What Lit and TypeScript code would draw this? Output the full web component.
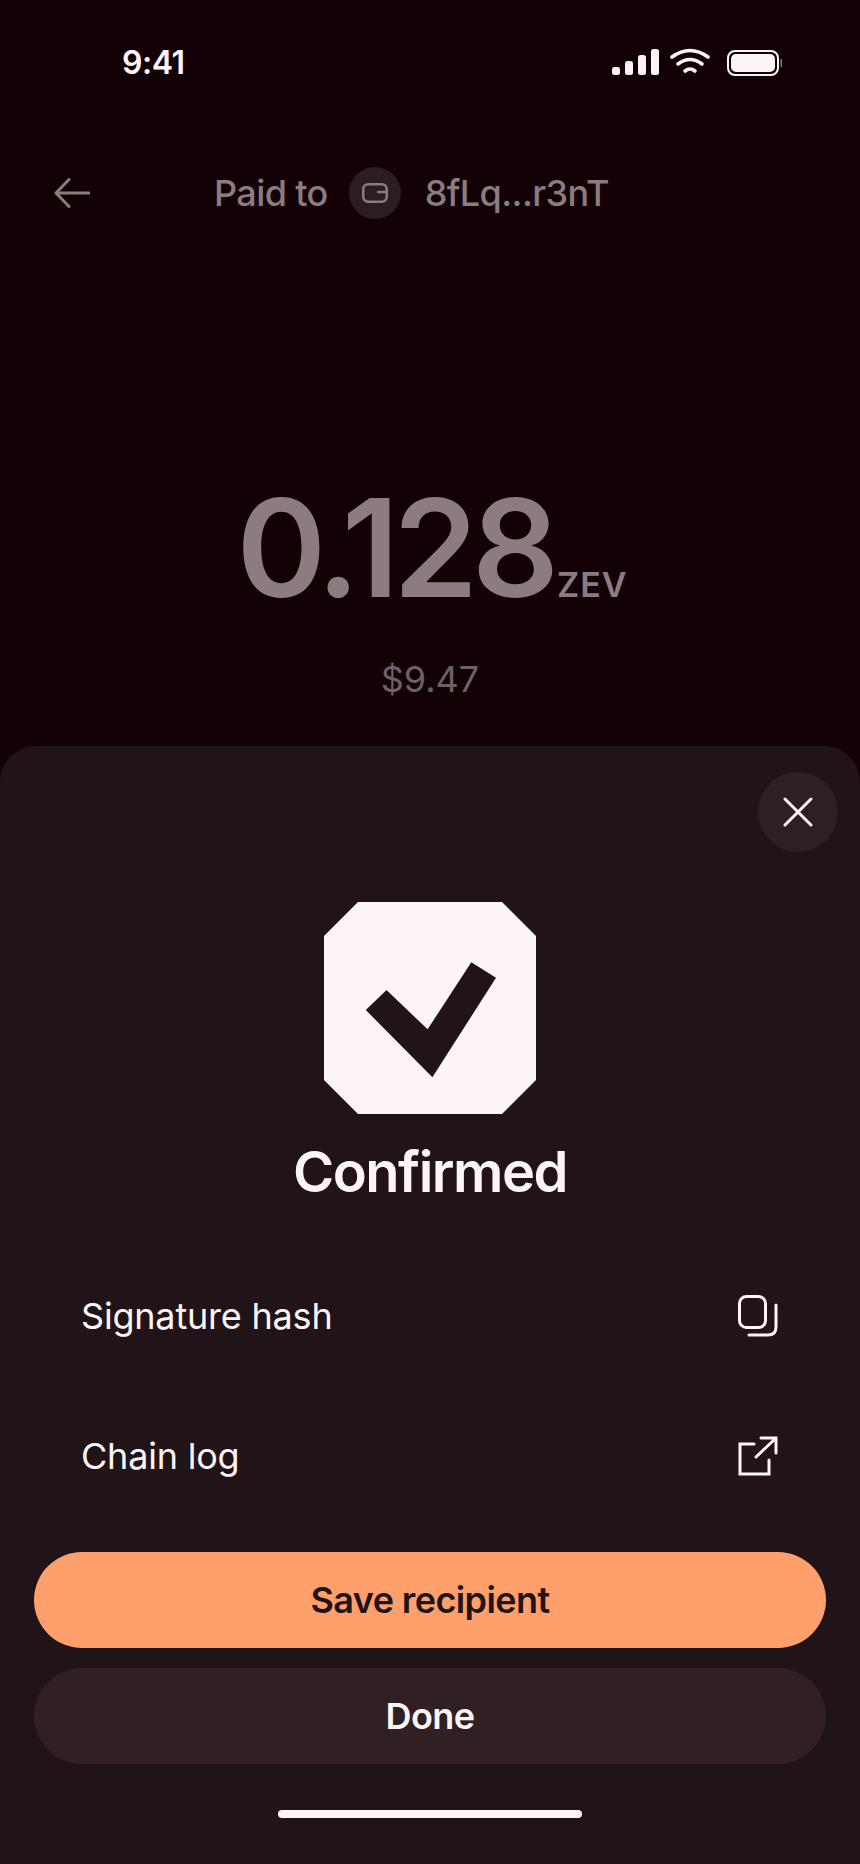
import { LitElement, html, css } from "lit";
import { customElement } from "lit/decorators.js";

@customElement("app-root")
export class AppRoot extends LitElement {
  static styles = css`
    :host {
      display: flex;
      flex-direction: column;
      width: 860px;
      height: 1864px;
      background: #120206;
      font-family: Inter, "Liberation Sans", sans-serif;
      color: #fdf5f5;
      overflow: hidden;
    }
    svg { display: block; flex: none; }
    .status {
      height: 124px;
      flex: none;
      display: flex;
      align-items: center;
      justify-content: space-between;
      padding: 0 78px 0 122px;
      box-sizing: border-box;
    }
    .time { font-size: 32px; font-weight: 600; letter-spacing: -0.5px; }
    .nav {
      height: 138px;
      flex: none;
      display: flex;
      align-items: center;
      padding-left: 54px;
      color: #8c7b80;
      font-size: 36px;
      font-weight: 500;
      letter-spacing: -0.6px;
    }
    .title { display: flex; align-items: center; margin-left: 124px; }
    .avatar {
      width: 52px;
      height: 52px;
      border-radius: 50%;
      background: #2b1e21;
      display: flex;
      align-items: center;
      justify-content: center;
      margin: 0 24px 0 21px;
    }
    .amount {
      flex: none;
      height: 484px;
      box-sizing: border-box;
      padding-top: 220px;
      display: flex;
      flex-direction: column;
      align-items: center;
      color: #8c7b80;
    }
    .value { display: flex; align-items: baseline; line-height: 132px; margin-left: 4px; }
    .num { font-size: 136px; font-weight: 600; letter-spacing: -6px; }
    .unit { font-size: 34px; font-weight: 600; letter-spacing: 1px; margin-left: 4px; }
    .fiat { font-size: 36px; line-height: 44px; color: #6f6065; margin-top: 6px; }
    .sheet {
      position: relative;
      flex: 1;
      background: #211418;
      border-radius: 36px 36px 0 0;
      display: flex;
      flex-direction: column;
      align-items: center;
      padding: 156px 34px 0;
      box-sizing: border-box;
    }
    .close {
      position: absolute;
      top: 26px;
      right: 22px;
      width: 80px;
      height: 80px;
      border-radius: 50%;
      background: #2d2023;
      display: flex;
      align-items: center;
      justify-content: center;
    }
    .heading {
      font-size: 56px;
      font-weight: 600;
      letter-spacing: -1.5px;
      line-height: 68px;
      margin-top: 24px;
    }
    .rows { align-self: stretch; margin-top: 40px; display: flex; flex-direction: column; }
    .row {
      height: 140px;
      display: flex;
      align-items: center;
      justify-content: space-between;
      padding: 0 48px 0 47px;
      font-size: 36px;
      letter-spacing: -0.2px;
    }
    .actions {
      align-self: stretch;
      display: flex;
      flex-direction: column;
      gap: 20px;
      margin-top: 26px;
    }
    .btn {
      height: 96px;
      border-radius: 48px;
      display: flex;
      align-items: center;
      justify-content: center;
      font-size: 36px;
      font-weight: 600;
      letter-spacing: -0.6px;
    }
    .primary { background: #ff9f6b; color: #211418; }
    .secondary { background: #302024; }
    .home {
      width: 304px;
      height: 8px;
      border-radius: 4px;
      background: #fdf5f5;
      margin-top: 46px;
    }
  `;

  render() {
    return html`
      <div class="status">
        <span class="time">9:41</span>
        <svg width="172" height="30" viewBox="0 0 172 30" fill="#fdf5f5">
          <rect x="2" y="20" width="8" height="8" rx="2.5" />
          <rect x="15" y="14" width="8" height="14" rx="2.5" />
          <rect x="28" y="8" width="8" height="20" rx="2.5" />
          <rect x="41" y="2" width="8" height="26" rx="2.5" />
          <g fill="none" stroke="#fdf5f5" stroke-width="3.6" stroke-linecap="round">
            <path d="M62 10 Q80 -3 98 10" />
            <path d="M68 17 Q80 8 92 17" />
            <path d="M75 24 Q80 20 85 24" />
          </g>
          <rect x="118" y="4" width="50" height="24" rx="7" fill="none" stroke="#fdf5f5" stroke-width="2" />
          <rect x="121" y="7" width="44" height="18" rx="5" />
          <rect x="170.500" y="12" width="1.500" height="8" fill="#8c7b80" />
        </svg>
      </div>
      <div class="nav">
        <svg width="36" height="30" viewBox="0 0 36 30" fill="none" stroke="#8c7b80" stroke-width="3" stroke-linecap="round" stroke-linejoin="round">
          <path d="M35 15 H2 M15 1.500 L2 15 L15 28.500" />
        </svg>
        <div class="title">
          <span>Paid to</span>
          <span class="avatar">
            <svg width="26" height="20" viewBox="0 0 26 20" fill="none" stroke="#8c7b80" stroke-width="2.500" stroke-linecap="round">
              <rect x="1.250" y="1.250" width="23.500" height="17.500" rx="5" />
              <path d="M16 9 H24" />
            </svg>
          </span>
          <span>8fLq...r3nT</span>
        </div>
      </div>
      <div class="amount">
        <div class="value"><span class="num">0.128</span><span class="unit">ZEV</span></div>
        <div class="fiat">$9.47</div>
      </div>
      <div class="sheet">
        <div class="close">
          <svg width="30" height="30" viewBox="0 0 30 30" fill="none" stroke="#fdf5f5" stroke-width="3" stroke-linecap="round">
            <path d="M2 2 L28 28 M28 2 L2 28" />
          </svg>
        </div>
        <svg width="212" height="212" viewBox="0 0 212 212">
          <path fill="#fdf5f5" d="M34 0 H178 L212 34 V178 L178 212 H34 L0 178 V34 Z" />
          <path fill="#211418" d="M41.800 108 L62.500 88 L103.600 127.300 L147.300 60.300 L172 75.700 L108.400 175.300 Z" />
        </svg>
        <div class="heading">Confirmed</div>
        <div class="rows">
          <div class="row">
            <span>Signature hash</span>
            <svg width="40" height="42" viewBox="0 0 40 42" fill="none" stroke="#fdf5f5" stroke-width="3" stroke-linecap="round">
              <rect x="1.500" y="1.500" width="26" height="31" rx="7" />
              <path d="M38 10 V32 Q38 40 30 40 H11" />
            </svg>
          </div>
          <div class="row">
            <span>Chain log</span>
            <svg width="40" height="40" viewBox="0 0 40 40" fill="none" stroke="#fdf5f5" stroke-width="3" stroke-linecap="round">
              <path d="M16 8 H2 V38 H31 V24" />
              <path d="M18 21 L38 2 M23 2 H38 V17" />
            </svg>
          </div>
        </div>
        <div class="actions">
          <div class="btn primary">Save recipient</div>
          <div class="btn secondary">Done</div>
        </div>
        <div class="home"></div>
      </div>
    `;
  }
}
